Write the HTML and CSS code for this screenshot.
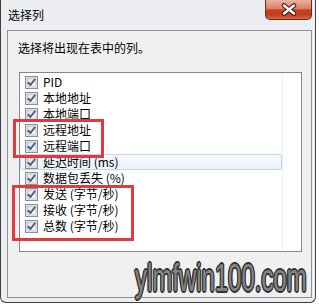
FILE: index.html
```html
<!DOCTYPE html>
<html lang="zh-CN">
<head>
<meta charset="utf-8">
<title>选择列</title>
<link rel="stylesheet" href="styles.css">
</head>
<body>
<svg class="defs" width="0" height="0">
  <defs>
    <linearGradient id="cbg" x1="0" y1="0" x2="1" y2="1">
      <stop offset="0" stop-color="#d9dcdf"/>
      <stop offset="1" stop-color="#fbfbfb"/>
    </linearGradient>
    <symbol id="cb" viewBox="0 0 13 13">
      <rect x="0.5" y="0.5" width="12" height="12" fill="#f4f4f4" stroke="#8e8f8f"/>
      <rect x="2" y="2" width="9" height="9" fill="url(#cbg)" stroke="#b4b8bd" stroke-width="0.8"/>
      <path d="M3.2 6.6 L5.4 9 L9.8 3.4" fill="none" stroke="#4a5e8c" stroke-width="1.9" stroke-linecap="round" stroke-linejoin="round"/>
    </symbol>
  </defs>
</svg>
<div class="window">
  <div class="titlebar">
    <span class="title">选择列</span>
    <div class="close">
      <svg width="45" height="19" viewBox="0 0 45 19">
        <path d="M18 5.5 L28 13.5 M28 5.5 L18 13.5" stroke="#3a1810" stroke-width="4.6" stroke-linecap="round"/>
        <path d="M18 5.5 L28 13.5 M28 5.5 L18 13.5" stroke="#ffffff" stroke-width="2.4" stroke-linecap="round"/>
      </svg>
    </div>
  </div>
  <div class="panel">
    <p class="prompt">选择将出现在表中的列。</p>
    <div class="listbox">
      <div class="column">
        <div class="row"><svg class="cb"><use href="#cb"/></svg><span>PID</span></div>
        <div class="row"><svg class="cb"><use href="#cb"/></svg><span>本地地址</span></div>
        <div class="row"><svg class="cb"><use href="#cb"/></svg><span>本地端口</span></div>
        <div class="row"><svg class="cb"><use href="#cb"/></svg><span>远程地址</span></div>
        <div class="row"><svg class="cb"><use href="#cb"/></svg><span>远程端口</span></div>
        <div class="row hot"><svg class="cb"><use href="#cb"/></svg><span>延迟时间 (ms)</span></div>
        <div class="row"><svg class="cb"><use href="#cb"/></svg><span>数据包丢失 (%)</span></div>
        <div class="row"><svg class="cb"><use href="#cb"/></svg><span>发送 (字节/秒)</span></div>
        <div class="row"><svg class="cb"><use href="#cb"/></svg><span>接收 (字节/秒)</span></div>
        <div class="row"><svg class="cb"><use href="#cb"/></svg><span>总数 (字节/秒)</span></div>
      </div>
    </div>
  </div>
  <div class="mark mark1"></div>
  <div class="mark mark2"></div>
  <div class="watermark">ylmfwin100.com</div>
</div>
</body>
</html>
```
FILE: styles.css
```css
html, body {
  margin: 0;
  padding: 0;
  background: #ffffff;
}
body {
  width: 319px;
  height: 305px;
  overflow: hidden;
  font-family: "Noto Sans CJK SC", "Liberation Sans", sans-serif;
  color: #000;
}
.defs {
  position: absolute;
  width: 0;
  height: 0;
}
.window {
  position: relative;
  width: 314px;
  height: 302px;
  border: 1px solid #3d3f42;
  border-top: 0;
  border-radius: 0 0 6px 6px;
  background: #eceef1;
}
.titlebar {
  display: flex;
  justify-content: space-between;
  align-items: flex-start;
  height: 30px;
}
.title {
  padding-left: 7px;
  font-size: 12px;
  line-height: 30px;
}
.close {
  width: 45px;
  height: 19px;
  margin-right: 3px;
  border: 1px solid #6b2a1c;
  border-top: 0;
  border-radius: 0 0 5px 5px;
  background: linear-gradient(#ebb3a5 0%, #dc7e68 45%, #c7421f 52%, #c33c1c 78%, #d9693f 100%);
}
.close svg {
  display: block;
}
.panel {
  margin-left: 6px;
  width: 303px;
  height: 266px;
  border: 1px solid #8e9094;
  background: #f0f0f0;
}
.prompt {
  margin: 0;
  padding: 9px 0 0 10px;
  font-size: 12px;
  line-height: 16px;
}
.listbox {
  box-sizing: border-box;
  margin: 16px 0 0 11px;
  width: 283px;
  height: 180px;
  padding-top: 1px;
  border: 1px solid #828790;
  background: #ffffff;
}
.column {
  width: 262px;
  height: 100%;
  border-right: 1px solid #e8eef3;
}
.row {
  display: flex;
  align-items: center;
  gap: 5px;
  height: 14px;
  padding-left: 4px;
  border: 1px solid transparent;
  border-radius: 2px;
  font-size: 12px;
  line-height: 16px;
  white-space: nowrap;
}
.row.hot {
  border-color: #c4d6e8;
  background: linear-gradient(#f7fafe, #e9f2fc);
}
.cb {
  width: 13px;
  height: 13px;
  flex: none;
}
.mark {
  position: absolute;
  box-sizing: border-box;
  border: 3px solid #e0393e;
}
.mark1 {
  left: 12px;
  top: 119px;
  width: 91px;
  height: 39px;
}
.mark2 {
  left: 11px;
  top: 185px;
  width: 122px;
  height: 56px;
}
.watermark {
  position: absolute;
  left: 134px;
  top: 259px;
  font-family: "Liberation Sans", sans-serif;
  font-size: 38px;
  line-height: 38px;
  color: #858585;
  white-space: nowrap;
  transform: scaleX(0.63);
  transform-origin: left top;
  text-shadow:
    1.8px 0 0 #333, -1.8px 0 0 #333, 0 1.8px 0 #333, 0 -1.8px 0 #333,
    1.3px 1.3px 0 #333, -1.3px 1.3px 0 #333, 1.3px -1.3px 0 #333, -1.3px -1.3px 0 #333,
    0 0 4px rgba(255,255,255,0.9);
}
```
